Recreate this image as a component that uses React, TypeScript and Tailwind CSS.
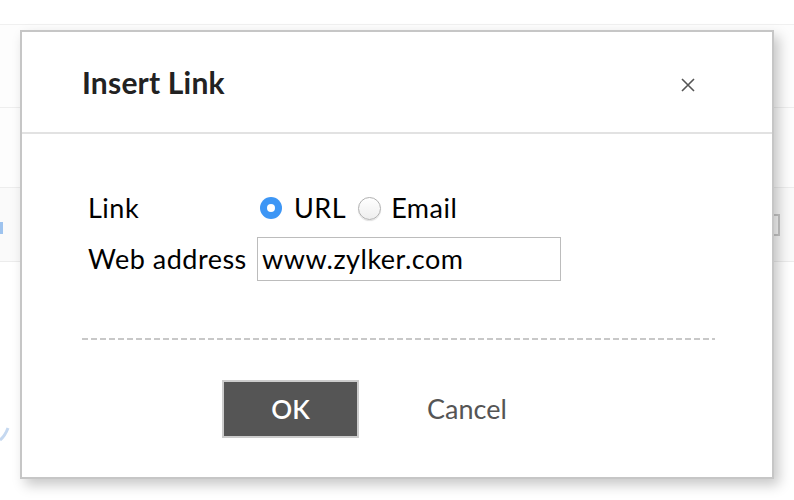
import React from "react";

export default function App() {
  return (
    <div
      className="relative w-[794px] h-[500px] overflow-hidden bg-white"
      style={{ fontFamily: "Lato, 'Noto Sans', sans-serif" }}
    >
      {/* background page */}
      <div className="flex flex-col w-full h-full">
        <div className="h-[25px] bg-white border-b border-[#f0f0f0]" />
        <div className="h-[83px] bg-[#fdfdfd] border-b border-[#eeeeee]" />
        <div className="h-[80px] bg-[#fdfdfd] border-b border-[#ededed]" />
        <div className="relative h-[74px] bg-[#fafafa] border-b border-[#ececec]">
          <div className="absolute left-0 top-[34px] w-[3px] h-[12px] bg-[#9ec3ee]" />
          <div className="absolute right-[14px] top-[26px] w-[6px] h-[22px] border-2 border-l-0 border-[#c8c8c8]" />
        </div>
        <div className="relative flex-1 bg-white">
          <svg className="absolute left-0 top-[158px]" width="12" height="26" viewBox="0 0 12 26">
            <path d="M0 20 Q5 16 8 8" stroke="#c5d8f0" strokeWidth="3" fill="none" />
          </svg>
        </div>
      </div>

      {/* dialog */}
      <div className="absolute left-[20px] top-[30px] w-[754px] h-[449px] bg-white border-2 border-[#c6c6c6] shadow-[5px_6px_12px_rgba(0,0,0,0.22)] flex flex-col">
        <div className="h-[102px] shrink-0 flex items-center justify-between pl-[60px] pr-[76px] border-b-2 border-[#e2e2e2]">
          <div className="text-[30px] font-bold text-[#222] tracking-[0.2px]">Insert Link</div>
          <svg className="mt-[6px]" width="16" height="16" viewBox="0 0 16 16">
            <path d="M2 2 L14 14 M14 2 L2 14" stroke="#555" strokeWidth="1.6" />
          </svg>
        </div>

        <div className="flex flex-col pt-[60px] pl-[66px] gap-[15px] text-[27px] tracking-[0.5px] text-black">
          <div className="flex items-center h-[28px]">
            <div className="w-[169px]">Link</div>
            <div className="flex items-center">
              <span className="ml-[3px] w-[22px] h-[22px] rounded-full bg-[#3d96f5] flex items-center justify-center">
                <span className="w-[8px] h-[8px] rounded-full bg-white" />
              </span>
              <span className="ml-[12px]">URL</span>
              <span className="ml-[12px] w-[23px] h-[23px] rounded-full border border-[#b0b0b0] bg-gradient-to-b from-white to-[#eeeeee] shadow-[0_1px_1px_rgba(0,0,0,0.12)]" />
              <span className="ml-[10px]">Email</span>
            </div>
          </div>
          <div className="flex items-center h-[44px]">
            <div className="w-[169px]">Web address</div>
            <div className="w-[304px] h-[44px] border border-[#bcbcbc] flex items-center pl-[4px]">
              www.zylker.com
            </div>
          </div>
        </div>

        <div className="mt-[57px] ml-[60px] w-[633px] h-[2px] bg-[linear-gradient(to_right,#c8c8c8_66%,transparent_0)] bg-[length:9px_2px]" />

        <div className="flex items-center mt-[40px] pl-[200px]">
          <div className="w-[137px] h-[58px] bg-[#555555] border-2 border-[#cccccc] flex items-center justify-center text-white text-[26px] font-semibold">
            OK
          </div>
          <div className="ml-[68px] text-[27px] text-[#555]">Cancel</div>
        </div>
      </div>
    </div>
  );
}
